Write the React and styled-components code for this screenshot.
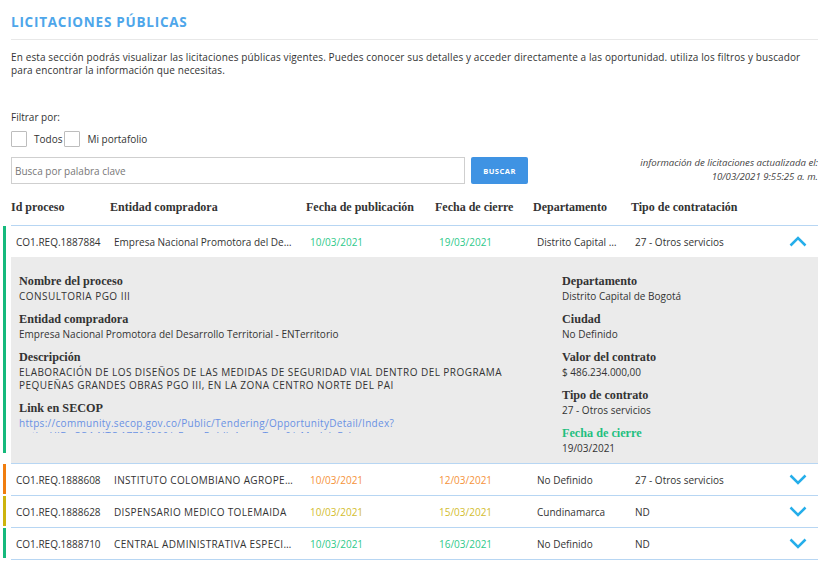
import React from "react";
import styled, { createGlobalStyle } from "styled-components";

const Global = createGlobalStyle`
  html, body { margin: 0; padding: 0; background: #fff; }
  body { font-family: "Open Sans", "Liberation Sans", sans-serif; color: #333; }
  * { box-sizing: border-box; }
`;

const Page = styled.div`
  width: 834px;
  padding: 14px 16px 0 11px;
`;

const Title = styled.h1`
  margin: 0;
  font-size: 13.5px;
  line-height: 16px;
  font-weight: 700;
  color: #4ea6ea;
  letter-spacing: 0.75px;
`;

const Rule = styled.hr`
  margin: 9px 0 0;
  border: 0;
  border-top: 1px solid #e8e8e8;
`;

const Intro = styled.p`
  margin: 11px 0 0;
  font-size: 10px;
  line-height: 13px;
  letter-spacing: 0.12px;
  color: #333;
`;

const FilterLabel = styled.div`
  margin-top: 34px;
  font-size: 10px;
  line-height: 13px;
`;

const Checks = styled.div`
  display: flex;
  align-items: center;
  margin-top: 7px;
  height: 16px;
`;

const Check = styled.span`
  width: 16px;
  height: 16px;
  border: 1px solid #bdbdbd;
  border-radius: 1px;
  margin-right: 7px;
  background: #fff;
`;

const CheckText = styled.span`
  font-size: 10px;
  margin-right: 2px;
`;

const SearchRow = styled.div`
  display: flex;
  align-items: flex-start;
  margin-top: 10px;
`;

const Input = styled.div`
  width: 454px;
  height: 27px;
  border: 1px solid #cfcfcf;
  display: flex;
  align-items: center;
  padding-left: 3px;
  font-size: 10px;
  color: #777;
`;

const Button = styled.div`
  margin-left: 6px;
  width: 57px;
  height: 27px;
  background: #3f93e3;
  border-radius: 2px;
  color: #fff;
  font-size: 7.5px;
  font-weight: 700;
  letter-spacing: 0.5px;
  display: flex;
  align-items: center;
  justify-content: center;
`;

const Updated = styled.div`
  margin-left: auto;
  text-align: right;
  font-style: italic;
  font-size: 9.6px;
  line-height: 14px;
  color: #444;
  margin-top: -1px;
`;

const cols = "99px 196px 129px 98px 98px 1fr 40px";

const HeadRow = styled.div`
  display: grid;
  grid-template-columns: ${cols};
  margin-top: 11px;
  height: 31px;
  padding-bottom: 5px;
  align-items: center;
  border-bottom: 1px solid #b7d6f3;
`;

const HeadCell = styled.div`
  font-family: "Liberation Serif", "Times New Roman", serif;
  font-weight: 700;
  font-size: 12px;
  color: #333;
  white-space: nowrap;
`;

const Item = styled.div`
  display: flex;
  margin-left: -8px;
`;

const Bar = styled.div`
  width: 3px;
  flex: none;
  background: ${(p) => p.$color};
  margin-right: 5px;
  margin-bottom: ${(p) => (p.$open ? "11px" : "2px")};
`;

const ItemBody = styled.div`
  flex: 1;
  min-width: 0;
  border-bottom: 1px solid #b7d6f3;
`;

const Row = styled.div`
  display: grid;
  grid-template-columns: ${cols};
  height: 31px;
  align-items: center;
`;

const Cell = styled.div`
  padding-left: ${(p) => (p.$first ? "5px" : "4px")};
  padding-right: ${(p) => (p.$first ? "0" : "12px")};
  font-size: 10px;
  letter-spacing: ${(p) => (p.$caps ? "0.35px" : "0")};
  color: ${(p) => p.$color || "#333"};
  white-space: nowrap;
  overflow: hidden;
  text-overflow: ellipsis;
`;

const Toggle = styled.div`
  display: flex;
  justify-content: center;
  align-items: center;
`;

const Detail = styled.div`
  background: #ebebeb;
  display: grid;
  grid-template-columns: 543px 1fr;
  padding: 16px 8px 8px;
`;

const Col = styled.div`
  display: flex;
  flex-direction: column;
  gap: 8px;
`;

const Group = styled.div``;

const Label = styled.div`
  font-family: "Liberation Serif", "Times New Roman", serif;
  font-weight: 700;
  font-size: 12.2px;
  line-height: 16px;
  color: ${(p) => (p.$accent ? "#1fbf7f" : "#333")};
`;

const Value = styled.div`
  padding-top: 1px;
  font-size: 10px;
  line-height: 13px;
  letter-spacing: ${(p) => (p.$caps ? "0.45px" : "0")};
  color: #333;
`;

const LinkBox = styled.div`
  padding-top: 1px;
  font-size: 10px;
  line-height: 13px;
  letter-spacing: 0.3px;
  color: #6991e4;
  max-height: 17px;
  overflow: hidden;
  white-space: nowrap;
`;

const Chevron = ({ up }) => (
  <svg width="18" height="11" viewBox="0 0 18 11">
    <path
      d={up ? "M1.5 9.5 L9 2 L16.5 9.5" : "M1.5 1.5 L9 9 L16.5 1.5"}
      fill="none"
      stroke="#25aeea"
      strokeWidth="2.5"
    />
  </svg>
);

const rows = [
  {
    id: "CO1.REQ.1887884",
    ent: "Empresa Nacional Promotora del Desarrollo Territorial",
    pub: "10/03/2021",
    cierre: "19/03/2021",
    dep: "Distrito Capital de Bogotá",
    tipo: "27 - Otros servicios",
    bar: "#15b97c",
    date: "#2ec98a",
    open: true,
  },
  {
    id: "CO1.REQ.1888608",
    ent: "INSTITUTO COLOMBIANO AGROPECUARIO",
    caps: true,
    pub: "10/03/2021",
    cierre: "12/03/2021",
    dep: "No Definido",
    tipo: "27 - Otros servicios",
    bar: "#f07d0e",
    date: "#f5923a",
  },
  {
    id: "CO1.REQ.1888628",
    ent: "DISPENSARIO MEDICO TOLEMAIDA",
    caps: true,
    pub: "10/03/2021",
    cierre: "15/03/2021",
    dep: "Cundinamarca",
    tipo: "ND",
    bar: "#cdb40d",
    date: "#d3bd2e",
  },
  {
    id: "CO1.REQ.1888710",
    ent: "CENTRAL ADMINISTRATIVA ESPECIALIZADA",
    caps: true,
    pub: "10/03/2021",
    cierre: "16/03/2021",
    dep: "No Definido",
    tipo: "ND",
    bar: "#15b97c",
    date: "#2ec98a",
  },
];

export default function App() {
  return (
    <>
      <Global />
      <Page>
        <Title>LICITACIONES PÚBLICAS</Title>
        <Rule />
        <Intro>
          En esta sección podrás visualizar las licitaciones públicas vigentes. Puedes conocer sus detalles y acceder
          directamente a las oportunidad. utiliza los filtros y buscador para encontrar la información que necesitas.
        </Intro>
        <FilterLabel>Filtrar por:</FilterLabel>
        <Checks>
          <Check />
          <CheckText>Todos</CheckText>
          <Check />
          <CheckText>Mi portafolio</CheckText>
        </Checks>
        <SearchRow>
          <Input>Busca por palabra clave</Input>
          <Button>BUSCAR</Button>
          <Updated>
            información de licitaciones actualizada el:
            <br />
            10/03/2021 9:55:25 a. m.
          </Updated>
        </SearchRow>
        <HeadRow>
          <HeadCell>Id proceso</HeadCell>
          <HeadCell>Entidad compradora</HeadCell>
          <HeadCell>Fecha de publicación</HeadCell>
          <HeadCell>Fecha de cierre</HeadCell>
          <HeadCell>Departamento</HeadCell>
          <HeadCell>Tipo de contratación</HeadCell>
          <HeadCell />
        </HeadRow>
        {rows.map((r) => (
          <Item key={r.id}>
            <Bar $color={r.bar} $open={r.open} />
            <ItemBody>
              <Row>
                <Cell $first>{r.id}</Cell>
                <Cell $caps={r.caps}>{r.ent}</Cell>
                <Cell $color={r.date}>{r.pub}</Cell>
                <Cell $color={r.date}>{r.cierre}</Cell>
                <Cell>{r.dep}</Cell>
                <Cell>{r.tipo}</Cell>
                <Toggle>
                  <Chevron up={r.open} />
                </Toggle>
              </Row>
              {r.open && (
                <Detail>
                  <Col>
                    <Group>
                      <Label>Nombre del proceso</Label>
                      <Value $caps>CONSULTORIA PGO III</Value>
                    </Group>
                    <Group>
                      <Label>Entidad compradora</Label>
                      <Value>Empresa Nacional Promotora del Desarrollo Territorial - ENTerritorio</Value>
                    </Group>
                    <Group>
                      <Label>Descripción</Label>
                      <Value $caps>
                        ELABORACIÓN DE LOS DISEÑOS DE LAS MEDIDAS DE SEGURIDAD VIAL DENTRO DEL PROGRAMA
                        <br />
                        PEQUEÑAS GRANDES OBRAS PGO III, EN LA ZONA CENTRO NORTE DEL PAI
                      </Value>
                    </Group>
                    <Group>
                      <Label>Link en SECOP</Label>
                      <LinkBox>
                        https://community.secop.gov.co/Public/Tendering/OpportunityDetail/Index?
                        <br />
                        noticeUID=CO1.NTC.1770490&amp;isFromPublicArea=True&amp;isModal=False
                      </LinkBox>
                    </Group>
                  </Col>
                  <Col>
                    <Group>
                      <Label>Departamento</Label>
                      <Value>Distrito Capital de Bogotá</Value>
                    </Group>
                    <Group>
                      <Label>Ciudad</Label>
                      <Value>No Definido</Value>
                    </Group>
                    <Group>
                      <Label>Valor del contrato</Label>
                      <Value>$ 486.234.000,00</Value>
                    </Group>
                    <Group>
                      <Label>Tipo de contrato</Label>
                      <Value>27 - Otros servicios</Value>
                    </Group>
                    <Group>
                      <Label $accent>Fecha de cierre</Label>
                      <Value>19/03/2021</Value>
                    </Group>
                  </Col>
                </Detail>
              )}
            </ItemBody>
          </Item>
        ))}
      </Page>
    </>
  );
}
